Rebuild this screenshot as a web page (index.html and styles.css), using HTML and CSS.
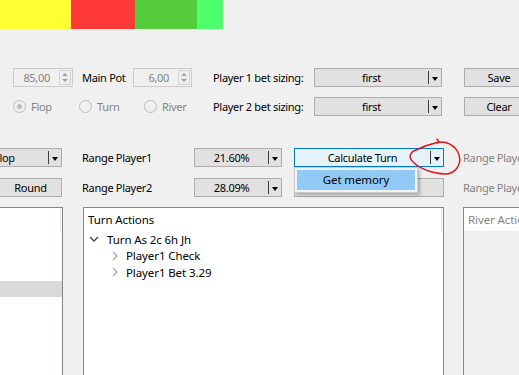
FILE: index.html
```html
<!DOCTYPE html>
<html>
<head>
  <meta charset="utf-8">
  <title>Solver</title>
  <link rel="stylesheet" href="styles.css">
</head>
<body>
  <div class="colorbar">
    <span class="seg seg-yellow"></span>
    <span class="seg seg-red"></span>
    <span class="seg seg-green"></span>
    <span class="seg seg-lime"></span>
  </div>

  <div class="row row-one">
    <div class="spin spin-stack">
      <span class="spin-val">85,00</span>
      <span class="spin-btns"><i class="up"></i><i class="down"></i></span>
    </div>
    <span class="label label-pot">Main Pot</span>
    <div class="spin spin-pot">
      <span class="spin-val">6,00</span>
      <span class="spin-btns"><i class="up"></i><i class="down"></i></span>
    </div>
    <span class="label label-sizing">Player 1 bet sizing:</span>
    <div class="combo combo-sizing"><span class="combo-text">first</span><span class="combo-arrow"></span></div>
    <div class="btn btn-side">Save</div>
  </div>

  <div class="row row-two">
    <label class="radio radio-flop"><span class="dot checked"></span>Flop</label>
    <label class="radio radio-turn"><span class="dot"></span>Turn</label>
    <label class="radio radio-river"><span class="dot"></span>River</label>
    <span class="label label-sizing">Player 2 bet sizing:</span>
    <div class="combo combo-sizing"><span class="combo-text">first</span><span class="combo-arrow"></span></div>
    <div class="btn btn-side">Clear</div>
  </div>

  <div class="row row-three">
    <div class="combo combo-street"><span class="combo-text left">Flop</span><span class="combo-arrow"></span></div>
    <span class="label label-range">Range Player1</span>
    <div class="combo combo-range"><span class="combo-text">21.60%</span><span class="combo-arrow"></span></div>
    <div class="btn btn-calc active"><span class="calc-text">Calculate Turn</span><span class="combo-arrow"></span></div>
    <span class="label label-off">Range Player1</span>

    <div class="popup">
      <div class="popup-item">Get memory</div>
    </div>
    <svg class="scribble" width="60" height="46" viewBox="0 0 60 46">
      <path d="M30 5 C 38 2, 49 7, 52 17 C 55 27, 48 36, 38 36 C 27 36, 13 31, 6 24 C 1 19, 3 14, 9 12 C 15 9, 23 6, 32 4 L 30 1" fill="none" stroke="#e01010" stroke-width="1.4" stroke-linecap="round" stroke-linejoin="round"/>
    </svg>
  </div>

  <div class="row row-four">
    <div class="btn btn-round">Round</div>
    <span class="label label-range">Range Player2</span>
    <div class="combo combo-range"><span class="combo-text">28.09%</span><span class="combo-arrow"></span></div>
    <div class="btn btn-calc"></div>
    <span class="label label-off">Range Player2</span>
  </div>

  <div class="panels">
    <div class="panel panel-flop">
      <div class="panel-head"></div>
      <div class="tree-row"></div>
      <div class="tree-row"></div>
      <div class="tree-row"></div>
      <div class="tree-row selected"></div>
    </div>
    <div class="panel panel-turn">
      <div class="panel-head">Turn Actions</div>
      <div class="tree-row">
        <svg class="chev" width="10" height="8" viewBox="0 0 10 8"><path d="M1 2 L5 6 L9 2" fill="none" stroke="#404040" stroke-width="1.3"/></svg>
        Turn As 2c 6h Jh
      </div>
      <div class="tree-row child">
        <svg class="chev" width="8" height="10" viewBox="0 0 8 10"><path d="M2 1 L6 5 L2 9" fill="none" stroke="#a6a6a6" stroke-width="1.3"/></svg>
        Player1 Check
      </div>
      <div class="tree-row child">
        <svg class="chev" width="8" height="10" viewBox="0 0 8 10"><path d="M2 1 L6 5 L2 9" fill="none" stroke="#a6a6a6" stroke-width="1.3"/></svg>
        Player1 Bet 3.29
      </div>
    </div>
    <div class="panel panel-river">
      <div class="panel-head">River Actions</div>
    </div>
  </div>
</body>
</html>
```

FILE: styles.css
```css
body {
  margin: 0;
  padding: 0;
  width: 519px;
  height: 375px;
  overflow: hidden;
  background: #f0f0f0;
  font-family: "Noto Sans", "Open Sans", sans-serif;
  font-size: 11px;
  letter-spacing: -0.3px;
  color: #000;
}

.colorbar {
  display: flex;
  height: 29px;
}

.seg {
  display: block;
  height: 100%;
}

.seg-yellow { width: 71px; background: #ffff33; }
.seg-red { width: 64px; background: #ff3838; }
.seg-green { width: 62px; background: #55cc3a; }
.seg-lime { width: 26px; background: #4dff6a; }

.row {
  display: flex;
  align-items: center;
  height: 19px;
  white-space: nowrap;
}

.row > * {
  flex-shrink: 0;
}

.row-one { margin-top: 39px; }
.row-two { margin-top: 10px; }
.row-three { margin-top: 32px; position: relative; }
.row-four { margin-top: 11px; }

.label {
  display: block;
  line-height: 19px;
}

/* spin boxes */
.spin {
  display: flex;
  box-sizing: border-box;
  height: 19px;
  border: 1px solid #cccccc;
  background: #f0f0f0;
  color: #838383;
}

.spin-val {
  flex: 1;
  text-align: right;
  padding-right: 9px;
  line-height: 17px;
}

.spin-btns {
  display: flex;
  flex-direction: column;
  justify-content: space-around;
  align-items: center;
  width: 12px;
  margin: 1px 1px 1px 0;
  border: 1px solid #d5d5d5;
  box-sizing: border-box;
}

.spin-btns i {
  display: block;
  width: 0;
  height: 0;
  border-left: 3px solid transparent;
  border-right: 3px solid transparent;
}

.spin-btns .up { border-bottom: 3px solid #a0a0a0; }
.spin-btns .down { border-top: 3px solid #a0a0a0; }

.spin-stack { margin-left: 13px; width: 60px; }
.label-pot { margin-left: 9px; width: 51px; }
.spin-pot { width: 59px; }
.label-sizing { margin-left: 21px; width: 101px; }

/* combo boxes */
.combo {
  display: flex;
  box-sizing: border-box;
  height: 19px;
  border: 1px solid #adadad;
  background: #e1e1e1;
}

.combo-text {
  flex: 1;
  text-align: center;
  line-height: 17px;
}

.combo-text.left {
  text-align: left;
  padding-left: 5px;
}

.combo-arrow {
  position: relative;
  width: 12px;
  border-left: 1px solid #3c3c3c;
  margin: 2px 0;
}

.combo-arrow::after {
  content: "";
  position: absolute;
  left: 3px;
  top: 6px;
  border-left: 3.5px solid transparent;
  border-right: 3.5px solid transparent;
  border-top: 4px solid #000;
}

.combo-sizing { width: 128px; }

.btn {
  box-sizing: border-box;
  height: 19px;
  border: 1px solid #adadad;
  background: #e1e1e1;
  text-align: center;
  line-height: 17px;
}

.btn-side { margin-left: 22px; width: 70px; }

/* radios */
.radio {
  display: flex;
  align-items: center;
  color: #838383;
  line-height: 19px;
}

.dot {
  position: relative;
  width: 11px;
  height: 11px;
  border: 1px solid #bcbcbc;
  border-radius: 50%;
  background: #f0f0f0;
  margin-right: 5px;
}

.dot.checked::after {
  content: "";
  position: absolute;
  left: 3px;
  top: 3px;
  width: 5px;
  height: 5px;
  border-radius: 50%;
  background: #bcbcbc;
}

.radio-flop { margin-left: 13px; width: 66px; }
.radio-turn { width: 65px; }
.radio-river { width: 48px; }

/* range rows */
.combo-street { margin-left: -12px; width: 74px; }
.btn-round { margin-left: -1px; width: 63px; }
.label-range { margin-left: 20px; width: 112px; }
.combo-range { width: 88px; }

.btn-calc {
  display: flex;
  margin-left: 12px;
  width: 150px;
}

.btn-calc.active {
  border-color: #0078d7;
  background: #e5f1fb;
}

.calc-text {
  flex: 1;
  text-align: center;
}

.label-off {
  margin-left: 19px;
  color: #838383;
}

.popup {
  position: absolute;
  left: 294px;
  top: 19px;
  width: 124px;
  height: 26px;
  box-sizing: border-box;
  border: 1px solid #cccccc;
  background: #f2f2f2;
  box-shadow: 2px 2px 3px rgba(0, 0, 0, 0.25);
  padding: 2px;
  z-index: 2;
}

.popup-item {
  height: 20px;
  line-height: 20px;
  background: #91c9f7;
  text-align: center;
  font-size: 11.5px;
  letter-spacing: -0.1px;
}

.scribble {
  position: absolute;
  left: 407px;
  top: -10px;
  z-index: 3;
}

/* tree panels */
.panels {
  display: flex;
  margin-top: 10px;
  height: 168px;
}

.panel {
  box-sizing: border-box;
  flex-shrink: 0;
  height: 100%;
  border: 1px solid #828790;
  border-bottom: none;
  background: #fff;
}

.panel-flop {
  margin-left: -5px;
  width: 68px;
}

.panel-turn {
  margin-left: 20px;
  width: 361px;
}

.panel-river {
  margin-left: 19px;
  width: 80px;
  background: #f0f0f0;
  color: #838383;
}

.panel-head {
  height: 23px;
  line-height: 24px;
  padding-left: 4px;
  background: #fff;
  border-right: 1px solid #e5e5e5;
  margin-right: 1px;
  font-size: 11.5px;
  letter-spacing: -0.1px;
  white-space: nowrap;
}

.tree-row {
  display: flex;
  align-items: center;
  height: 16.5px;
  padding-left: 5px;
  font-size: 11.5px;
  letter-spacing: -0.1px;
  white-space: nowrap;
}

.tree-row .chev {
  margin-right: 8px;
}

.tree-row.child {
  padding-left: 27px;
}

.tree-row.child .chev {
  margin-right: 7px;
}

.tree-row.selected {
  background: #d9d9d9;
}
```
